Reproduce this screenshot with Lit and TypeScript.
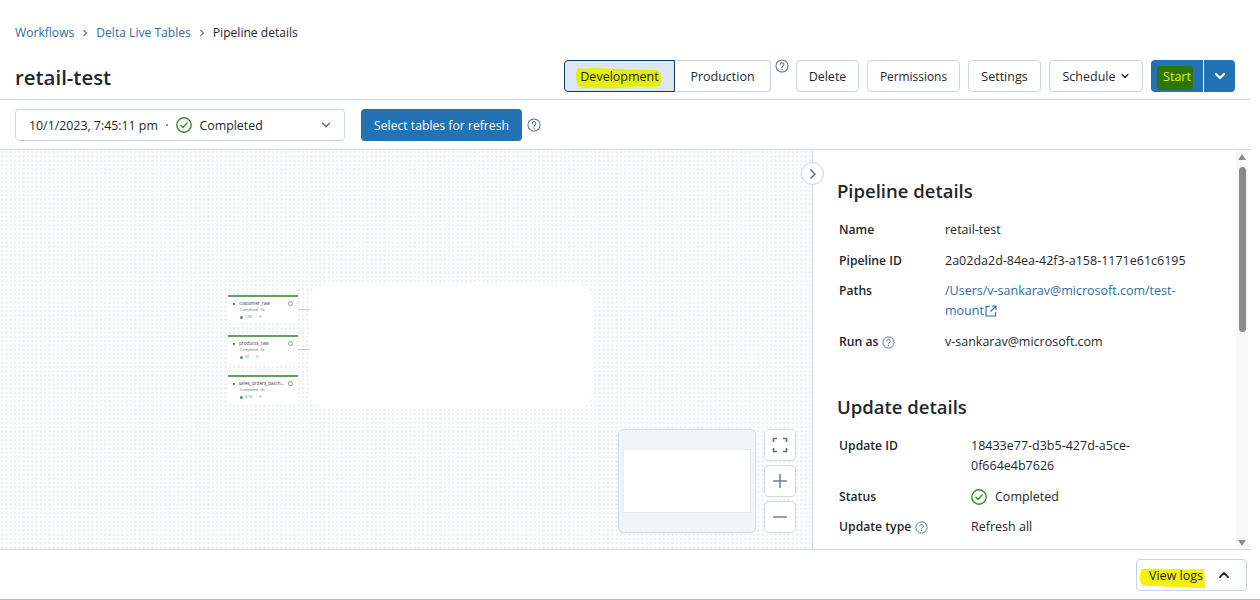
import { LitElement, css, html, svg } from 'lit';
import { customElement } from 'lit/decorators.js';

const helpIcon = (size = 14) => html`<svg class="help" width=${size} height=${size} viewBox="0 0 16 16" fill="none" stroke="#5f7281" stroke-width="1.2">
  <circle cx="8" cy="8" r="6.9"></circle>
  <path d="M5.9 6.3a2.1 2.1 0 1 1 3.3 1.7c-.8.5-1.2.9-1.2 1.8" stroke-linecap="round"></path>
  <circle cx="8" cy="11.7" r=".8" fill="#5f7281" stroke="none"></circle>
</svg>`;

const checkIcon = html`<svg width="16" height="16" viewBox="0 0 16 16" fill="none" stroke="#3a8a2e" stroke-width="1.4">
  <circle cx="8" cy="8" r="7.2"></circle>
  <path d="M4.9 8.2l2.2 2.2 4-4.4" stroke-linecap="round" stroke-linejoin="round"></path>
</svg>`;

const chevron = (size: number, color: string, width: number, up = false) => html`<svg width=${size} height=${size} viewBox="0 0 12 12" fill="none" stroke=${color} stroke-width=${width}>
  <path d=${up ? 'M2.5 7.8L6 4.2l3.5 3.6' : 'M2.5 4.2L6 7.8l3.5-3.6'} stroke-linecap="round" stroke-linejoin="round"></path>
</svg>`;

const crumbSep = html`<svg width="8" height="10" viewBox="0 0 8 10" fill="none" stroke="#5f7281" stroke-width="1.1"><path d="M2.5 2l3 3-3 3"></path></svg>`;

// rough marker strokes, someone highlighted the screenshot by hand
const marker = (cls: string, w: number, h: number, d: string, fill: string) => html`<svg class="marker ${cls}" width=${w} height=${h} viewBox="0 0 ${w} ${h}">
  ${svg`<path d=${d} fill=${fill}></path>`}
</svg>`;

const nodes = [
  { name: 'customer_raw', time: 'Completed · 5s', count: '1.0K' },
  { name: 'products_raw', time: 'Completed · 4s', count: '50' },
  { name: 'sales_orders_batch...', time: 'Completed · 4s', count: '4.1K' },
];

@customElement('app-root')
export class AppRoot extends LitElement {
  static styles = css`
    :host {
      display: block;
      width: 1260px;
      height: 600px;
      overflow: hidden;
      position: relative;
      background: #fff;
      color: #1f272d;
      font-family: 'Open Sans', 'Liberation Sans', sans-serif;
      font-size: 12.5px;
      border-bottom: 1px solid #b8bcc0;
      box-sizing: border-box;
    }
    .page {
      width: 1251px;
      height: 599px;
      display: flex;
      flex-direction: column;
    }
    .head {
      height: 100px;
      box-sizing: border-box;
      border-bottom: 1px solid #d1d9e1;
      padding: 24px 16px 0 15px;
    }
    .crumbs {
      display: flex;
      align-items: center;
      height: 18px;
      gap: 7px;
      line-height: 18px;
      font-size: 12.1px;
    }
    .crumbs a,
    .link {
      color: #2b6ea6;
      text-decoration: none;
    }
    .crumbs .sep {
      color: #5f7281;
      display: flex;
    }
    .title-row {
      display: flex;
      align-items: flex-end;
      justify-content: space-between;
      margin-top: 18px;
      height: 32px;
    }
    h1 {
      font-size: 20.4px;
      font-weight: 600;
      margin: 0 0 2px;
      line-height: 26px;
    }
    .actions {
      display: flex;
      align-items: center;
      gap: 8px;
    }
    .btn {
      height: 32px;
      box-sizing: border-box;
      border: 1px solid #cbd5dd;
      border-radius: 4px;
      background: #fff;
      color: #1f272d;
      display: flex;
      align-items: center;
      justify-content: center;
      position: relative;
    }
    .btn span {
      position: relative;
    }
    .seg {
      display: flex;
    }
    .seg .dev {
      width: 111px;
      background: #dbe6f1;
      border-color: #0e3a5c;
      border-radius: 4px 0 0 4px;
    }
    .seg .prod {
      width: 96px;
      border-left: 0;
      border-radius: 0 4px 4px 0;
    }
    .seg-help {
      align-self: flex-start;
      margin: -1px -1px 0 -4px;
      display: flex;
      width: 14px;
    }
    .b-delete { width: 63px; }
    .b-perm { width: 93px; font-size: 11.9px; }
    .b-settings { width: 73px; }
    .b-schedule { width: 94px; gap: 4px; }
    .split {
      display: flex;
      width: 84px;
      height: 32px;
      border-radius: 4px;
      overflow: hidden;
      background: #2272b4;
      color: #fff;
    }
    .split .main {
      width: 52px;
      border-right: 1px solid #fff;
      display: flex;
      align-items: center;
      justify-content: center;
      position: relative;
      color: #e2ee12;
    }
    .split .main span {
      position: relative;
    }
    .split .drop {
      flex: 1;
      display: flex;
      align-items: center;
      justify-content: center;
    }
    .marker {
      position: absolute;
    }
    .m-dev {
      left: 10px;
      top: 6px;
    }
    .m-start {
      left: 6px;
      top: 6px;
    }
    .m-logs {
      left: 3px;
      top: 8px;
    }
    .toolbar {
      height: 50px;
      box-sizing: border-box;
      border-bottom: 1px solid #d1d9e1;
      padding: 9px 15px 0;
      display: flex;
      align-items: flex-start;
      gap: 16px;
      font-size: 12.2px;
    }
    .select {
      width: 330px;
      height: 32px;
      box-sizing: border-box;
      border: 1px solid #cbd5dd;
      border-radius: 4px;
      display: flex;
      align-items: center;
      padding: 0 12px 0 13px;
      gap: 7.500px;
      font-size: 12.350px;
    }
    .select .grow {
      flex: 1;
    }
    .primary {
      width: 161px;
      height: 32px;
      border-radius: 4px;
      background: #2272b4;
      color: #fff;
      display: flex;
      align-items: center;
      justify-content: center;
    }
    .tool-help {
      display: flex;
      margin: 9px 0 0 -11px;
    }
    .body {
      flex: 1;
      min-height: 0;
      display: flex;
    }
    .canvas {
      width: 812px;
      position: relative;
      border-right: 1px solid #d1d9e1;
      background-color: #fff;
      background-image: radial-gradient(circle at center, #ebeff3 1.15px, transparent 1.3px);
      background-size: 4.3px 4.3px;
    }
    .blob {
      position: absolute;
      left: 310px;
      top: 135px;
      width: 282px;
      height: 123px;
      background: #fff;
      border-radius: 14px;
    }
    .edge {
      position: absolute;
      left: 298px;
      width: 12px;
      height: 1px;
      background: #c5ccd3;
    }
    .node {
      position: absolute;
      left: 228px;
      width: 70px;
      height: 28px;
      box-sizing: border-box;
      background: #fff;
      border-top: 2px solid #64a05a;
      padding: 3px 5px 0 5px;
      font-size: 5px;
      line-height: 7px;
      color: #5f6b75;
    }
    .node .n-top {
      display: flex;
      align-items: center;
      gap: 4px;
      color: #333b42;
    }
    .node .n-top b {
      font-weight: 400;
      font-size: 4.7px;
      white-space: nowrap;
    }
    .node .sq {
      width: 2px;
      height: 2px;
      background: #6f7c87;
    }
    .node .ring {
      width: 3px;
      height: 3px;
      margin-left: auto;
      border: 1px solid #8aa586;
      border-radius: 50%;
    }
    .node .n-sub {
      font-size: 3.5px;
      line-height: 5px;
      padding-left: 7px;
      white-space: nowrap;
    }
    .node .n-foot {
      display: flex;
      align-items: center;
      gap: 2px;
      font-size: 3.5px;
      line-height: 6px;
      padding: 2px 0 0 7px;
    }
    .node .dot {
      width: 3px;
      height: 3px;
      border-radius: 50%;
      background: #4b9a5e;
    }
    .collapse {
      position: absolute;
      left: 801px;
      top: 12px;
      z-index: 1;
      width: 23px;
      height: 23px;
      box-sizing: border-box;
      border: 1px solid #cbd5dd;
      border-radius: 50%;
      background: #fff;
      display: flex;
      align-items: center;
      justify-content: center;
    }
    .map-tools {
      position: absolute;
      left: 618px;
      top: 279px;
      display: flex;
      gap: 8px;
    }
    .minimap {
      width: 138px;
      height: 104px;
      box-sizing: border-box;
      background: #f2f5f8;
      border: 1px solid #d1d9e1;
      border-radius: 5px;
      padding: 19px 4px 0;
    }
    .minimap div {
      height: 64px;
      background: #fff;
      border: 1px solid #e6ebf0;
      box-sizing: border-box;
    }
    .zoom {
      display: flex;
      flex-direction: column;
      gap: 4px;
    }
    .zoom div {
      width: 32px;
      height: 32px;
      box-sizing: border-box;
      border: 1px solid #d1d9e1;
      border-radius: 5px;
      background: #fff;
      display: flex;
      align-items: center;
      justify-content: center;
    }
    .panel {
      flex: 1;
      min-width: 0;
      overflow: hidden;
      display: flex;
    }
    .details {
      flex: 1;
      padding: 28px 0 0 24px;
      min-width: 0;
    }
    h2 {
      font-size: 18.5px;
      font-weight: 600;
      line-height: 26px;
      margin: 0;
    }
    .grid {
      display: grid;
      row-gap: 10.7px;
      margin: 16px 0 0 2px;
      line-height: 20px;
    }
    .grid.first {
      grid-template-columns: 106px 245px;
      margin-bottom: 42px;
    }
    .grid.second {
      grid-template-columns: 132px 190px;
      margin-top: 16px;
    }
    .label {
      font-weight: 600;
      display: flex;
      align-items: center;
      gap: 4px;
      height: 20px;
      font-size: 12.2px;
    }
    .value {
      overflow-wrap: anywhere;
    }
    .status {
      display: flex;
      align-items: center;
      gap: 8px;
    }
    .ext {
      vertical-align: -2px;
      margin-left: 1px;
    }
    .scroll {
      width: 12px;
      margin-right: 3px;
      background: #f8f8f8;
      display: flex;
      flex-direction: column;
      align-items: center;
      padding-top: 4px;
      height: 394px;
      position: relative;
    }
    .scroll .up,
    .scroll .down {
      width: 0;
      height: 0;
      border-left: 4px solid transparent;
      border-right: 4px solid transparent;
    }
    .scroll .up {
      border-bottom: 6px solid #8e8e8e;
    }
    .scroll .thumb {
      width: 7px;
      height: 165px;
      margin-top: 7px;
      background: #8a8a8a;
      border-radius: 4px;
    }
    .scroll .down {
      border-top: 6px solid #8e8e8e;
      margin-top: auto;
      margin-bottom: 2px;
    }
    .foot {
      height: 50px;
      box-sizing: border-box;
      border-top: 1px solid #d1d9e1;
      display: flex;
      justify-content: flex-end;
      padding: 9px 4px 0 0;
    }
    .logs {
      width: 111px;
      justify-content: flex-start;
      padding-left: 12px;
      gap: 14px;
    }
  `;

  private renderNode(n: { name: string; time: string; count: string }, top: number) {
    return html`<div class="node" style="top:${top}px">
      <div class="n-top"><i class="sq"></i><b>${n.name}</b><i class="ring"></i></div>
      <div class="n-sub">${n.time}</div>
      <div class="n-foot"><i class="dot"></i>${n.count}<span style="margin-left:3px">◦ 0</span></div>
    </div>`;
  }

  render() {
    return html`<div class="page">
      <header class="head">
        <nav class="crumbs">
          <a href="#">Workflows</a>
          <span class="sep">${crumbSep}</span>
          <a href="#">Delta Live Tables</a>
          <span class="sep">${crumbSep}</span>
          <span>Pipeline details</span>
        </nav>
        <div class="title-row">
          <h1>retail-test</h1>
          <div class="actions">
            <div class="seg">
              <div class="btn dev">
                ${marker('m-dev', 87, 23, 'M3 1C12 3 16 0 24 1c18 1 36 2 54 2 6 0 8 3 8 9 0 3 0 6-2 7-9 3-20-1-30 1-12 2-24 1-36 1C9 21 3 21 2 16 1 11 0 5 3 1z', '#e4ee10')}
                <span>Development</span>
              </div>
              <div class="btn prod"><span>Production</span></div>
            </div>
            <div class="seg-help">${helpIcon(14)}</div>
            <div class="btn b-delete"><span>Delete</span></div>
            <div class="btn b-perm"><span>Permissions</span></div>
            <div class="btn b-settings"><span>Settings</span></div>
            <div class="btn b-schedule"><span>Schedule</span>${chevron(10, '#1f272d', 1.6)}</div>
            <div class="split">
              <div class="main">
                ${marker('m-start', 36, 24, 'M3 0h30c2 0 3 2 3 4v15c0 3-1 5-4 5H4c-3 0-4-2-4-5V3c0-2 1-3 3-3z', '#2c7606')}
                <span>Start</span>
              </div>
              <div class="drop">${chevron(14, '#fff', 1.8)}</div>
            </div>
          </div>
        </div>
      </header>

      <div class="toolbar">
        <div class="select">
          <span>10/1/2023, 7:45:11 pm</span><span>·</span>
          ${checkIcon}
          <span>Completed</span>
          <span class="grow"></span>
          ${chevron(12, '#5f7281', 1.5)}
        </div>
        <div class="primary">Select tables for refresh</div>
        <div class="tool-help">${helpIcon(14)}</div>
      </div>

      <div class="body">
        <section class="canvas">
          <div class="blob"></div>
          <div class="edge" style="top:159px"></div>
          <div class="edge" style="top:199px"></div>
          ${nodes.map((n, i) => this.renderNode(n, 145 + i * 40))}
          <div class="collapse"><svg width="10" height="12" viewBox="0 0 10 12" fill="none" stroke="#5f7281" stroke-width="1.6"><path d="M3 2l4 4-4 4" stroke-linecap="round" stroke-linejoin="round"></path></svg></div>
          <div class="map-tools">
            <div class="minimap"><div></div></div>
            <div class="zoom">
              <div><svg width="16" height="16" viewBox="0 0 16 16" fill="none" stroke="#5f7281" stroke-width="1.7"><path d="M1.5 5V1.500H5M11 1.500h3.500V5M14.500 11v3.500H11M5 14.500H1.500V11"></path></svg></div>
              <div><svg width="16" height="16" viewBox="0 0 16 16" fill="none" stroke="#6f7f8c" stroke-width="1.5"><path d="M1 8h14M8 1v14"></path></svg></div>
              <div><svg width="16" height="16" viewBox="0 0 16 16" fill="none" stroke="#6f7f8c" stroke-width="1.5"><path d="M1 8h14"></path></svg></div>
            </div>
          </div>
        </section>

        <aside class="panel">
          <div class="details">
            <h2>Pipeline details</h2>
            <div class="grid first">
              <div class="label">Name</div><div class="value">retail-test</div>
              <div class="label">Pipeline ID</div><div class="value">2a02da2d-84ea-42f3-a158-1171e61c6195</div>
              <div class="label">Paths</div>
              <div class="value"><a class="link" href="#">/Users/v-sankarav@microsoft.com/test-<br />mount<svg class="ext" width="12" height="12" viewBox="0 0 12 12" fill="none" stroke="#2b6ea6" stroke-width="1.1"><path d="M5 1.500H1v9.500h9.500V7M7 1h4v4M11 1L5.500 6.500"></path></svg></a></div>
              <div class="label">Run as ${helpIcon(13)}</div><div class="value">v-sankarav@microsoft.com</div>
            </div>
            <h2>Update details</h2>
            <div class="grid second">
              <div class="label">Update ID</div><div class="value">18433e77-d3b5-427d-a5ce-<br />0f664e4b7626</div>
              <div class="label">Status</div><div class="value status">${checkIcon}Completed</div>
              <div class="label">Update type ${helpIcon(13)}</div><div class="value">Refresh all</div>
            </div>
          </div>
          <div class="scroll"><i class="up"></i><i class="thumb"></i><i class="down"></i></div>
        </aside>
      </div>

      <footer class="foot">
        <div class="btn logs">
          ${marker('m-logs', 65, 20, 'M2 1c20-1 45 1 62 0l1 19C45 20 25 18 8 18 3 18 0 16 0 12 0 8 0 3 2 1z', '#f4f014')}
          <span>View logs</span>
          ${chevron(14, '#1f272d', 1.6, true)}
        </div>
      </footer>
    </div>`;
  }
}
